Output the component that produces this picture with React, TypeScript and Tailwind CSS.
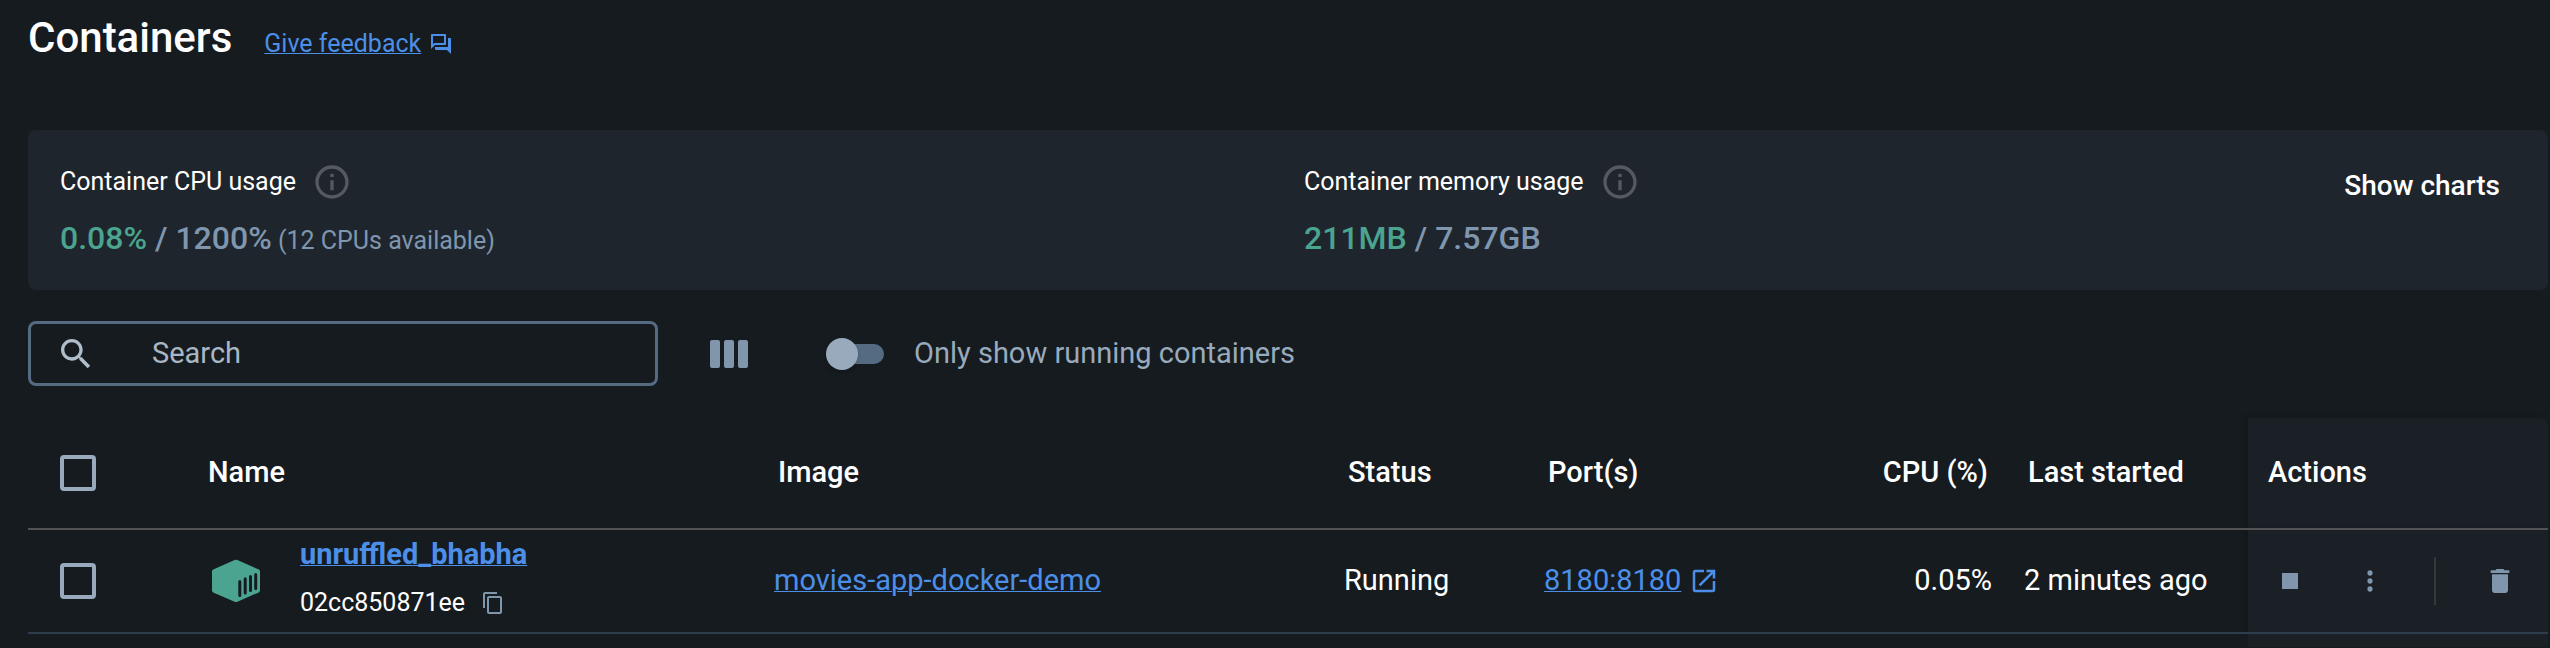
import React from 'react';

type IconProps = { d: string; className: string };

function Icon({ d, className }: IconProps) {
  return (
    <svg viewBox="0 0 24 24" fill="currentColor" aria-hidden="true" className={className}>
      <path d={d} />
    </svg>
  );
}

const icons = {
  feedback:
    'M15 4v7H5.17L4 12.17V4h11m1-2H3c-.55 0-1 .45-1 1v14l4-4h10c.55 0 1-.45 1-1V3c0-.55-.45-1-1-1zm5 4h-2v9H6v2c0 .55.45 1 1 1h11l4 4V7c0-.55-.45-1-1-1z',
  info: 'M11 7h2v2h-2zm0 4h2v6h-2zm1-9C6.48 2 2 6.48 2 12s4.48 10 10 10 10-4.48 10-10S17.52 2 12 2zm0 18c-4.41 0-8-3.59-8-8s3.59-8 8-8 8 3.59 8 8-3.59 8-8 8z',
  search:
    'M15.5 14h-.79l-.28-.27C15.41 12.59 16 11.11 16 9.5 16 5.91 13.09 3 9.5 3S3 5.91 3 9.5 5.91 16 9.5 16c1.61 0 3.09-.59 4.23-1.57l.27.28v.79l5 4.99L20.49 19l-4.99-5zm-6 0C7.01 14 5 11.99 5 9.5S7.01 5 9.5 5 14 7.01 14 9.5 11.99 14 9.5 14z',
  copy: 'M16 1H4c-1.1 0-2 .9-2 2v14h2V3h12V1zm3 4H8c-1.1 0-2 .9-2 2v14c0 1.1.9 2 2 2h11c1.1 0 2-.9 2-2V7c0-1.1-.9-2-2-2zm0 16H8V7h11v14z',
  open: 'M19 19H5V5h7V3H5c-1.11 0-2 .9-2 2v14c0 1.1.89 2 2 2h14c1.1 0 2-.9 2-2v-7h-2v7zM14 3v2h3.59l-9.83 9.83 1.41 1.41L19 6.41V10h2V3h-7z',
  stop: 'M6 6h12v12H6z',
  more: 'M12 8c1.1 0 2-.9 2-2s-.9-2-2-2-2 .9-2 2 .9 2 2 2zm0 2c-1.1 0-2 .9-2 2s.9 2 2 2 2-.9 2-2-.9-2-2-2zm0 6c-1.1 0-2 .9-2 2s.9 2 2 2 2-.9 2-2-.9-2-2-2z',
  trash: 'M6 19c0 1.1.9 2 2 2h8c1.1 0 2-.9 2-2V7H6v12zM19 4h-3.5l-1-1h-5l-1 1H5v2h14V4z',
};

function ContainerCube() {
  return (
    <svg viewBox="0 0 48 44" aria-hidden="true" className="h-11 w-12 shrink-0">
      <path
        d="M22.6 1Q24 .3 25.4 1L46.8 10.6Q48 11.200 48 12.500V31.500Q48 32.800 46.800 33.400L25.400 42.700Q24 43.300 22.600 42.700L1.200 33.400Q0 32.800 0 31.500V12.500Q0 11.200 1.200 10.600Z"
        fill="#4aa48f"
      />
      <path
        d="M27.800 22.500V36.500M33.200 19.700V34M38.500 17.500V31.500M43.700 15.500V29.500"
        stroke="#161b1f"
        strokeWidth="3"
        strokeLinecap="round"
      />
    </svg>
  );
}

function Usage({ title, used, total, note }: { title: string; used: string; total: string; note?: string }) {
  return (
    <section>
      <div className="flex h-10 items-center gap-4">
        <h2 className="text-[25px] text-white">{title}</h2>
        <Icon d={icons.info} className="size-10 text-[#555a62]" />
      </div>
      <p className="mt-4 text-[32px] leading-10 font-medium text-[#7f96af]">
        <span className="text-[#4aa48f]">{used}</span> / {total}
        {note && <span className="text-[25px] font-normal"> {note}</span>}
      </p>
    </section>
  );
}

function Checkbox({ label }: { label: string }) {
  return (
    <input
      type="checkbox"
      aria-label={label}
      className="block size-9 appearance-none rounded-sm border-4 border-[#98aabc] checked:bg-[#98aabc]"
    />
  );
}

const containers = [
  {
    name: 'unruffled_bhabha',
    id: '02cc850871ee',
    image: 'movies-app-docker-demo',
    status: 'Running',
    port: '8180:8180',
    cpu: '0.05%',
    started: '2 minutes ago',
  },
];

export default function App() {
  return (
    <main className="min-h-screen bg-[#161b1f] pr-0.5 pl-7 font-[Roboto,sans-serif] text-white">
      <header className="flex h-[130px] items-baseline gap-8 pt-3">
        <h1 className="text-[42px] leading-[52px] font-medium">Containers</h1>
        <a href="#feedback" className="flex items-center gap-2 text-[25px] text-[#4c8fe9]">
          <span className="underline decoration-1 underline-offset-1">Give feedback</span>
          <Icon d={icons.feedback} className="size-6" />
        </a>
      </header>

      <div className="grid h-40 grid-cols-[1244px_1fr_auto] items-start rounded-lg bg-[#1f252c] pt-8 pr-12 pl-8">
        <Usage title="Container CPU usage" used="0.08%" total="1200%" note="(12 CPUs available)" />
        <Usage title="Container memory usage" used="211MB" total="7.57GB" />
        <button type="button" className="mt-1 text-[28px] leading-10 font-medium">
          Show charts
        </button>
      </div>

      <div className="mt-[31px] flex items-center">
        <label className="flex h-[65px] w-[630px] items-center rounded-lg border-3 border-[#556b82] pl-[25px] text-[#b0bdca]">
          <Icon d={icons.search} className="size-10" />
          <input
            type="text"
            aria-label="Search"
            placeholder="Search"
            className="ml-14 min-w-0 flex-1 bg-transparent text-[29px] outline-none placeholder:text-[#a9b7c5]"
          />
        </label>
        <button type="button" aria-label="Choose columns" className="ml-[52px] flex gap-1">
          <span className="h-7 w-2.5 rounded-xs bg-[#7f96ad]" />
          <span className="h-7 w-2.5 rounded-xs bg-[#7f96ad]" />
          <span className="h-7 w-2.5 rounded-xs bg-[#7f96ad]" />
        </button>
        <label className="ml-[78px] flex items-center gap-[30px] text-[29px] text-[#98aabc]">
          <span className="relative flex h-8 w-[58px] items-center justify-end">
            <input type="checkbox" className="peer sr-only" />
            <span className="h-5 w-[52px] rounded-full bg-[#556b82]" />
            <span className="absolute left-0 size-8 rounded-full bg-[#98aabc] shadow-md peer-checked:left-7" />
          </span>
          Only show running containers
        </label>
      </div>

      <table className="mt-8 w-full table-fixed border-collapse text-left text-[29px]">
        <colgroup>
          <col className="w-[180px]" />
          <col className="w-[566px]" />
          <col />
          <col className="w-[200px]" />
          <col className="w-[256px]" />
          <col className="w-[192px]" />
          <col className="w-[256px]" />
          <col className="w-[300px]" />
        </colgroup>
        <thead>
          <tr className="h-[111px] border-b-2 border-[#505253]">
            <th className="pl-8">
              <Checkbox label="Select all containers" />
            </th>
            <th className="font-medium">Name</th>
            <th className="pl-1 font-medium">Image</th>
            <th className="pl-1 font-medium">Status</th>
            <th className="pl-1 font-medium">Port(s)</th>
            <th className="pr-1 text-right font-medium">CPU (%)</th>
            <th className="pl-9 font-medium">Last started</th>
            <th className="rounded-tr-lg bg-[#1b2027] pl-5 font-medium shadow-[-4px_0_6px_rgba(0,0,0,0.12)]">Actions</th>
          </tr>
        </thead>
        <tbody>
          {containers.map((c) => (
            <tr key={c.id} className="h-[104px] border-b-2 border-[#2e3d4b]">
              <td className="pl-8">
                <Checkbox label={`Select ${c.name}`} />
              </td>
              <td>
                <div className="flex items-center gap-10 pl-1">
                  <ContainerCube />
                  <div className="pb-2">
                    <a
                      href="#container"
                      className="block leading-10 font-bold text-[#4c8fe9] underline decoration-1 underline-offset-1"
                    >
                      {c.name}
                    </a>
                    <div className="mt-[11px] flex items-center gap-4 text-[25px] leading-9">
                      {c.id}
                      <button type="button" aria-label="Copy container ID" className="text-[#7f96ad]">
                        <Icon d={icons.copy} className="size-6" />
                      </button>
                    </div>
                  </div>
                </div>
              </td>
              <td>
                <a href="#image" className="text-[#4c8fe9] underline decoration-1 underline-offset-1">
                  {c.image}
                </a>
              </td>
              <td>{c.status}</td>
              <td>
                <a href="#port" className="flex items-center gap-2 text-[#4c8fe9]">
                  <span className="underline decoration-1 underline-offset-1">{c.port}</span>
                  <Icon d={icons.open} className="size-[30px]" />
                </a>
              </td>
              <td className="text-right">{c.cpu}</td>
              <td className="pl-8">{c.started}</td>
              <td className="bg-[#1a2026] shadow-[-4px_0_6px_rgba(0,0,0,0.12)]">
                <div className="flex items-center pl-[26px] text-[#7f96ad]">
                  <button type="button" aria-label="Stop">
                    <Icon d={icons.stop} className="size-8" />
                  </button>
                  <button type="button" aria-label="More actions" className="ml-12">
                    <Icon d={icons.more} className="size-8" />
                  </button>
                  <span className="ml-12 h-12 w-0.5 bg-[#33383c]" />
                  <button type="button" aria-label="Delete" className="ml-12">
                    <Icon d={icons.trash} className="size-8" />
                  </button>
                </div>
              </td>
            </tr>
          ))}
          <tr className="h-[14px]">
            <td colSpan={7} />
            <td className="bg-[#1a2026]" />
          </tr>
        </tbody>
      </table>
    </main>
  );
}
